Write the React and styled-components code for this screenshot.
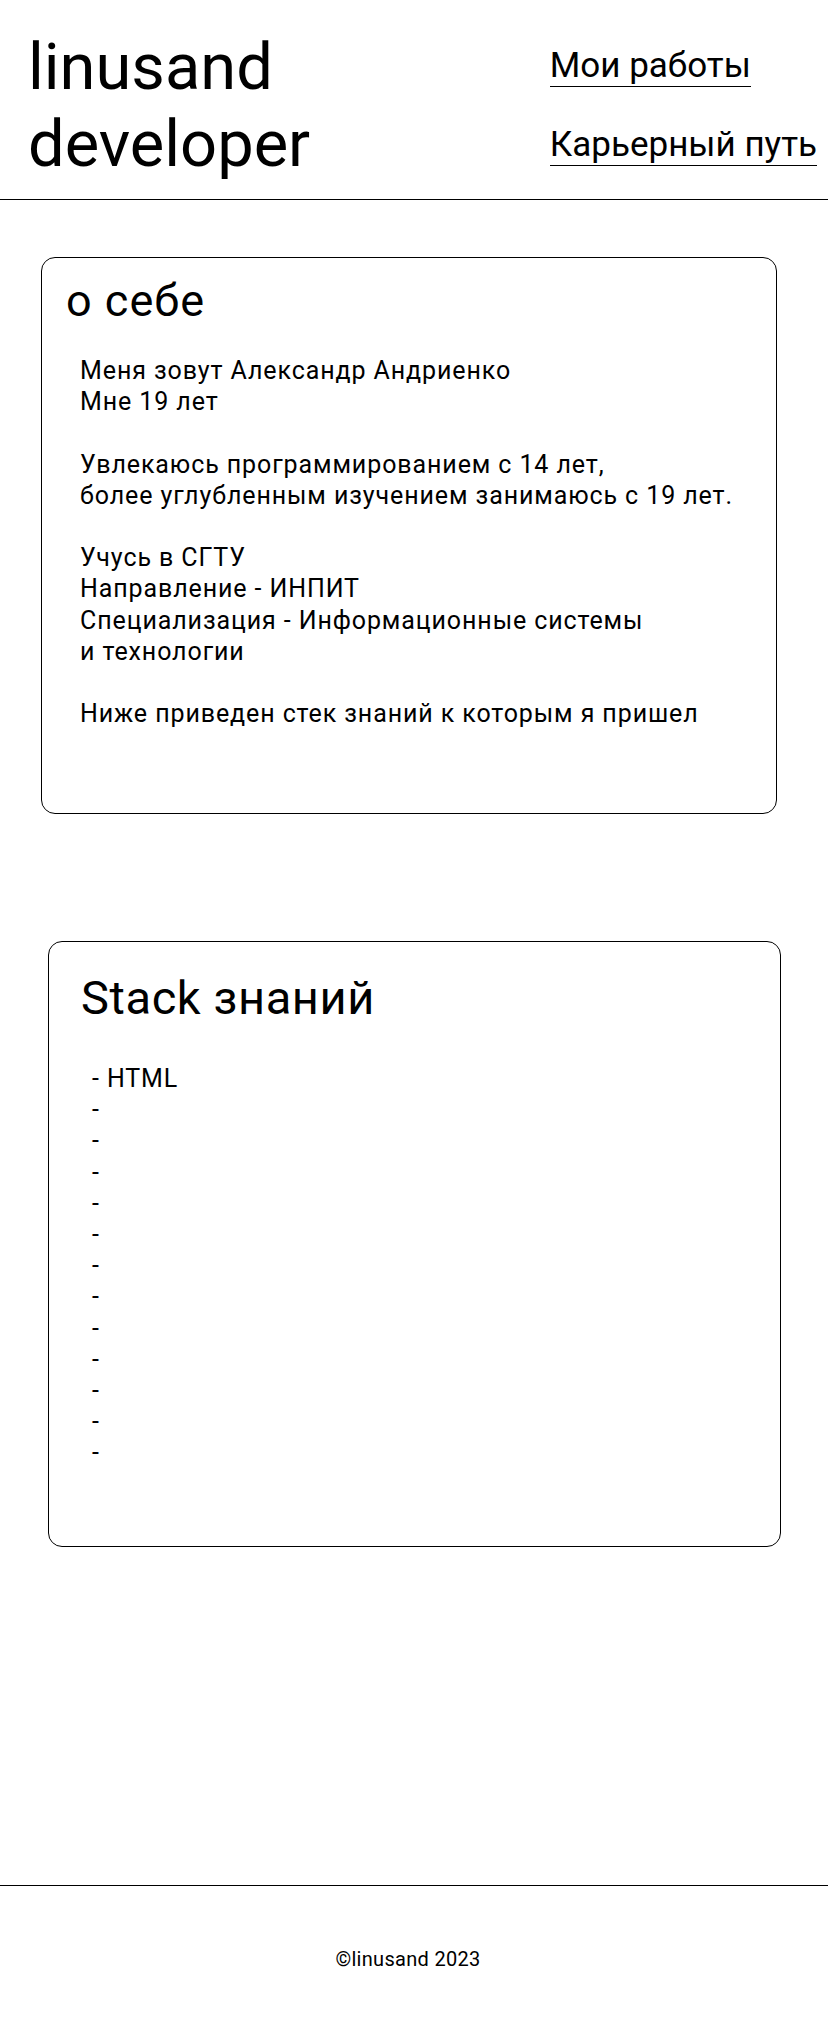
import React from 'react';
import styled, { createGlobalStyle } from 'styled-components';

const GlobalStyle = createGlobalStyle`
  body {
    margin: 0;
    background: #fff;
    color: #000;
    font-family: Roboto, "Noto Sans", sans-serif;
  }
`;

const Header = styled.header`
  height: 200px;
  box-sizing: border-box;
  padding: 29px 11px 0 28px;
  border-bottom: 1px solid #000;
  display: flex;
  justify-content: space-between;
  align-items: flex-start;
`;

const Logo = styled.div`
  font-size: 65px;
  line-height: 77px;
  font-weight: 400;
`;

const Nav = styled.nav`
  display: flex;
  flex-direction: column;
  align-items: flex-start;
  gap: 37px;
  padding-top: 16px;
`;

const NavLink = styled.a`
  font-size: 35px;
  color: #000;
  text-decoration: none;
  border-bottom: 1px solid #000;
`;

const Main = styled.main`
  padding-top: 57px;
  height: 1685px;
  box-sizing: border-box;
`;

const Card = styled.section`
  box-sizing: border-box;
  margin-left: ${p => p.left}px;
  width: ${p => p.width}px;
  height: ${p => p.height}px;
  margin-bottom: ${p => p.gap || 0}px;
  border: 1px solid #000;
  border-radius: 14px;
  padding: ${p => p.pad};
`;

const Title = styled.h2`
  margin: 0;
  font-weight: 400;
  font-size: ${p => p.size}px;
  letter-spacing: ${p => p.spacing || 0}px;
`;

const Text = styled.div`
  font-size: 25px;
  line-height: 31.2px;
  letter-spacing: 0.9px;
  padding-left: ${p => p.indent}px;
  margin-top: ${p => p.top}px;
  white-space: pre-line;
`;

const Footer = styled.footer`
  border-top: 1px solid #000;
  height: 152px;
  box-sizing: border-box;
  padding: 61px 12px 0 0;
  text-align: center;
  font-size: 20px;
  letter-spacing: 0.3px;
`;

const about = `Меня зовут Александр Андриенко
Мне 19 лет

Увлекаюсь программированием с 14 лет,
более углубленным изучением занимаюсь с 19 лет.

Учусь в СГТУ
Направление - ИНПИТ
Специализация - Информационные системы
и технологии

Ниже приведен стек знаний к которым я пришел`;

const stack = ['HTML', '', '', '', '', '', '', '', '', '', '', '', ''];

export default function App() {
  return (
    <>
      <GlobalStyle />
      <Header>
        <Logo>
          linusand
          <br />
          developer
        </Logo>
        <Nav>
          <NavLink href="#">Мои работы</NavLink>
          <NavLink href="#">Карьерный путь</NavLink>
        </Nav>
      </Header>
      <Main>
        <Card left={41} width={736} height={557} gap={127} pad="16px 24px">
          <Title size={45} spacing={1}>о себе</Title>
          <Text indent={14} top={28}>{about}</Text>
        </Card>
        <Card left={48} width={733} height={606} pad="28px 32px">
          <Title size={47} spacing={0.6}>Stack знаний</Title>
          <Text indent={11} top={38}>
            {stack.map((item, i) => (
              <div key={i}>- {item}</div>
            ))}
          </Text>
        </Card>
      </Main>
      <Footer>©linusand 2023</Footer>
    </>
  );
}
